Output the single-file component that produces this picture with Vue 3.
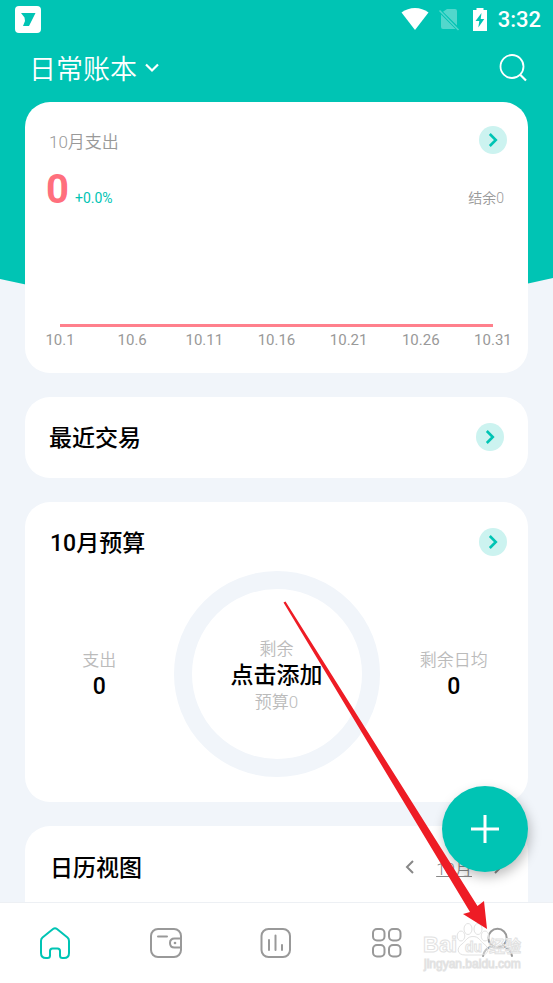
<script setup>
const days = ['10.1', '10.6', '10.11', '10.16', '10.21', '10.26', '10.31']
</script>

<template>
  <div class="app">
    <svg class="backdrop" viewBox="0 0 553 320" preserveAspectRatio="none" aria-hidden="true">
      <path d="M0 0H553V278Q276 342 0 279Z" />
    </svg>

    <header class="top">
      <div class="status">
        <svg class="badge" width="26" height="27" viewBox="0 0 26 27" aria-hidden="true">
          <rect width="26" height="27" rx="4" fill="#fff" />
          <path d="M6 7H20.500L14 20H8L10 15L9.500 11.500Z" fill="#00c4b4" />
        </svg>
        <div class="status-right">
          <svg width="28" height="24" viewBox="0 0 28 24" aria-hidden="true">
            <path d="M14 23L.5 5.500Q6.500 1 14 1T27.500 5.500Z" fill="#fff" />
          </svg>
          <svg class="sim" width="22" height="24" viewBox="0 0 22 24" aria-hidden="true">
            <path d="M9 2H17Q19 2 19 4V18.500L5 4.800ZM3 7.500L17.500 22H5Q3 22 3 20Z" fill="#fff" opacity=".32" />
            <path d="M1.500 3.500L20.500 23" stroke="#fff" stroke-width="1.500" opacity=".32" />
          </svg>
          <svg class="battery" width="16" height="24" viewBox="0 0 16 24" aria-hidden="true">
            <path d="M4.500 1H11.500V3H15V24H1V3H4.500Z" fill="#fff" />
            <path d="M9.500 6L3.500 14H7.300L6.300 20.500L12.300 12H8.700Z" fill="#00c4b4" />
          </svg>
          <span class="clock">3:32</span>
        </div>
      </div>
      <div class="title-bar">
        <button class="book" type="button">
          日常账本
          <svg width="16" height="12" viewBox="0 0 16 12" fill="none" stroke="#fff" stroke-width="2.200" aria-hidden="true">
            <path d="M2 2.500L8 8.500L14 2.500" />
          </svg>
        </button>
        <button class="search" type="button" aria-label="搜索">
          <svg width="28" height="28" viewBox="0 0 28 28" fill="none" stroke="#fff" stroke-width="1.800" aria-hidden="true">
            <circle cx="13" cy="12.500" r="11.500" />
            <path d="M21 20.500L27 26.500" stroke-width="2.200" />
          </svg>
        </button>
      </div>
    </header>

    <main class="cards">
      <section class="card expense">
        <div class="card-head">
          <h2 class="muted">10月支出</h2>
          <button class="more" type="button" aria-label="查看支出">
            <svg width="28" height="28" viewBox="0 0 28 28" aria-hidden="true"><path d="M10.800 8L16.800 14L10.800 20" /></svg>
          </button>
        </div>
        <div class="amounts">
          <strong class="total">0</strong>
          <span class="change">+0.0%</span>
          <span class="balance">结余0</span>
        </div>
        <div class="chart">
          <div class="line"></div>
          <ol class="axis">
            <li v-for="d in days" :key="d"><span>{{ d }}</span></li>
          </ol>
        </div>
      </section>

      <section class="card recent">
        <h2>最近交易</h2>
        <button class="more" type="button" aria-label="查看交易">
          <svg width="28" height="28" viewBox="0 0 28 28" aria-hidden="true"><path d="M10.800 8L16.800 14L10.800 20" /></svg>
        </button>
      </section>

      <section class="card budget">
        <div class="card-head">
          <h2>10月预算</h2>
          <button class="more" type="button" aria-label="查看预算">
            <svg width="28" height="28" viewBox="0 0 28 28" aria-hidden="true"><path d="M10.800 8L16.800 14L10.800 20" /></svg>
          </button>
        </div>
        <div class="summary">
          <div class="stat">
            <span>支出</span>
            <strong>0</strong>
          </div>
          <button class="ring" type="button">
            <span>剩余</span>
            <strong>点击添加</strong>
            <span>预算0</span>
          </button>
          <div class="stat">
            <span>剩余日均</span>
            <strong>0</strong>
          </div>
        </div>
      </section>

      <section class="card calendar">
        <h2>日历视图</h2>
        <div class="month">
          <button type="button" aria-label="上个月">
            <svg width="10" height="16" viewBox="0 0 10 16" aria-hidden="true"><path d="M8 2L2 8L8 14" /></svg>
          </button>
          <a href="#month">10月</a>
          <button type="button" aria-label="下个月">
            <svg width="10" height="16" viewBox="0 0 10 16" aria-hidden="true"><path d="M2 2L8 8L2 14" /></svg>
          </button>
        </div>
      </section>
    </main>

    <nav class="tabs">
      <a class="active" href="#home" aria-label="首页">
        <svg width="32" height="34" viewBox="0 0 32 34" aria-hidden="true">
          <path d="M14 3Q16 1.500 18 3L28.500 11.500Q30 12.800 30 15V27Q30 32 25 32H23.500Q21 32 21 29.500V25Q21 22.500 18.500 22.500H13.500Q11 22.500 11 25V29.500Q11 32 8.500 32H7Q2 32 2 27V15Q2 12.800 3.500 11.500Z" />
        </svg>
      </a>
      <a href="#wallet" aria-label="钱包">
        <svg width="34" height="34" viewBox="0 0 34 34" aria-hidden="true">
          <rect x="2" y="3" width="30" height="28" rx="7" />
          <path d="M9 10.500H18M32 12.500H25.500Q21 12.500 21 17T25.500 21.500H32" />
          <circle cx="26" cy="17" r="1.300" class="dot" />
        </svg>
      </a>
      <a href="#stats" aria-label="统计">
        <svg width="34" height="34" viewBox="0 0 34 34" aria-hidden="true">
          <rect x="2.500" y="3" width="28.500" height="28" rx="7" />
          <path d="M10 14V24M16.500 9.500V24M23 19V24" />
        </svg>
      </a>
      <a href="#apps" aria-label="应用">
        <svg width="34" height="34" viewBox="0 0 34 34" aria-hidden="true">
          <rect x="3" y="3" width="11.500" height="11.500" rx="4" />
          <rect x="19" y="3" width="11.500" height="11.500" rx="4" />
          <rect x="3" y="19" width="11.500" height="11.500" rx="4" />
          <rect x="19" y="19" width="11.500" height="11.500" rx="4" />
        </svg>
      </a>
      <a href="#me" aria-label="我的">
        <svg width="34" height="34" viewBox="0 0 34 34" aria-hidden="true">
          <circle cx="16.500" cy="12" r="9.200" />
          <path d="M2 30Q3.500 22.500 10.500 20.500Q16.500 23 22.500 20.500Q29.500 22.500 31 30" />
        </svg>
      </a>
    </nav>

    <button class="add" type="button" aria-label="记一笔">
      <svg width="28" height="28" viewBox="0 0 28 28" aria-hidden="true"><path d="M14 0V28M0 14H28" /></svg>
    </button>

    <svg class="mark" width="106" height="54" viewBox="0 0 106 54" aria-hidden="true">
      <g class="ink">
        <ellipse cx="41" cy="15" rx="3.800" ry="5" />
        <ellipse cx="48" cy="8" rx="4" ry="5.500" />
        <ellipse cx="58" cy="8" rx="4" ry="5.500" />
        <ellipse cx="65" cy="15" rx="3.800" ry="5" />
        <path d="M53 15.500C47 15.500 46 20 42 23C36 27 37 34 45 34H61C69 34 70 27 64 23C60 20 59 15.500 53 15.500Z" />
        <text x="3" y="31" font-size="22" font-weight="700">Bai</text>
        <text x="45" y="31" font-size="14" font-weight="700">du</text>
        <text x="69" y="31" font-size="16" font-weight="700">经验</text>
        <text x="4" y="47" font-size="12">jingyan.baidu.com</text>
      </g>
    </svg>

    <svg class="pointer" width="204" height="328" viewBox="0 0 204 328" aria-hidden="true">
      <path d="M.5 1.500L2.500 .5L194.500 305L201 300L204 328L180 313L187 311Z" />
    </svg>
  </div>
</template>

<style>
body {
  margin: 0;
}
</style>

<style scoped>
.app {
  position: relative;
  display: flex;
  flex-direction: column;
  height: 100vh;
  overflow: hidden;
  background: #f1f5fa;
  color: #000;
  font-family: Roboto, "Noto Sans CJK SC", sans-serif;
}

button {
  padding: 0;
  border: 0;
  background: none;
  color: inherit;
  font: inherit;
  cursor: pointer;
}

svg {
  display: block;
}

h2 {
  margin: 0;
  padding-top: 4px;
  font-size: 23px;
  line-height: 28px;
  font-weight: 500;
}

.backdrop {
  position: absolute;
  top: 0;
  left: 0;
  width: 100%;
  height: 320px;
  fill: #00c4b4;
}

.top {
  position: relative;
  color: #fff;
}

.status {
  display: flex;
  align-items: center;
  justify-content: space-between;
  height: 38px;
  padding: 0 12px 0 15px;
}

.status-right {
  display: flex;
  align-items: center;
}

.sim {
  margin-left: 9px;
}

.battery {
  margin-left: 12px;
}

.clock {
  margin-left: 10px;
  font-size: 22px;
  font-weight: 500;
}

.title-bar {
  display: flex;
  align-items: center;
  justify-content: space-between;
  height: 64px;
  padding: 0 26px 5px 29px;
  box-sizing: border-box;
}

.book {
  display: flex;
  align-items: center;
  gap: 7px;
  font-size: 27px;
  font-weight: 350;
}

.cards {
  position: relative;
  display: flex;
  flex: 1;
  flex-direction: column;
  gap: 24px;
  min-height: 0;
  padding: 0 25px;
  overflow-y: auto;
  scrollbar-width: none;
}

.card {
  flex-shrink: 0;
  box-sizing: border-box;
  border-radius: 25px;
  background: #fff;
}

.card-head {
  display: flex;
  align-items: center;
  justify-content: space-between;
}

.expense {
  padding: 22px 21px;
}

.expense .muted {
  padding-left: 3px;
  color: #999;
  font-size: 17px;
  font-weight: 350;
}

.more {
  border-radius: 50%;
  background: #ccf3f0;
  fill: none;
  stroke: #00c4b4;
  stroke-width: 2.6px;
}

.amounts {
  display: flex;
  align-items: baseline;
  margin-top: 10px;
  padding-right: 3px;
  font-size: 14px;
  line-height: 48px;
}

.total {
  color: #ff6f7d;
  font-size: 40px;
}

.change {
  margin-left: 6px;
  color: #00c4b4;
}

.balance {
  margin-left: auto;
  color: #999;
  font-weight: 350;
}

.chart {
  margin-top: 102px;
  padding: 0 14px;
}

.line {
  height: 3px;
  background: #ff808c;
}

.axis {
  display: flex;
  justify-content: space-between;
  margin: 2px 0 0;
  padding: 0;
  list-style: none;
  color: #999;
  font-size: 15px;
  line-height: 22px;
}

.axis li {
  display: flex;
  justify-content: center;
  width: 0;
}

.recent {
  display: flex;
  align-items: center;
  justify-content: space-between;
  padding: 24px 24px 25px;
}

.budget {
  height: 300px;
  padding: 24px 21px 24px 25px;
}

.summary {
  display: grid;
  grid-template-columns: 1fr 206px 1fr;
  align-items: center;
  margin: 13px -21px 0 -25px;
}

.stat,
.ring {
  display: flex;
  flex-direction: column;
  align-items: center;
  color: #bbb;
  font-size: 17px;
  font-weight: 350;
  line-height: 26px;
}

.ring {
  justify-content: center;
  box-sizing: border-box;
  height: 206px;
  padding-top: 3px;
  border: 18px solid #f1f5fa;
  border-radius: 50%;
  line-height: 25px;
}

.stat strong,
.ring strong {
  color: #000;
  font-size: 23px;
  font-weight: 500;
  line-height: 28px;
}

.calendar {
  display: flex;
  align-items: flex-start;
  justify-content: space-between;
  height: 340px;
  padding: 25px;
}

.month {
  display: flex;
  align-items: center;
  gap: 21px;
  height: 32px;
  fill: none;
  stroke: #888;
  stroke-width: 2px;
}

.month a {
  color: #888;
  font-size: 17px;
  font-weight: 350;
}

.tabs {
  position: relative;
  display: grid;
  grid-template-columns: repeat(5, 1fr);
  box-sizing: border-box;
  height: 81px;
  border-top: 1px solid #edf0f4;
  background: #fff;
}

.tabs a {
  display: flex;
  align-items: center;
  justify-content: center;
  fill: none;
  stroke: #999;
  stroke-width: 2px;
  stroke-linecap: round;
}

.tabs .active {
  stroke: #00c4b4;
}

.tabs .dot {
  fill: #999;
  stroke: none;
}

.add {
  position: absolute;
  right: 25px;
  bottom: 111px;
  display: flex;
  align-items: center;
  justify-content: center;
  width: 86px;
  height: 86px;
  border-radius: 50%;
  background: #00c4b4;
  box-shadow: 2px 5px 12px rgba(0, 0, 0, 0.25);
  stroke: #fff;
  stroke-width: 3px;
}

.mark {
  position: absolute;
  right: 27px;
  bottom: 8px;
  pointer-events: none;
}

.ink {
  fill: rgba(255, 255, 255, 0.4);
  stroke: #e2e2e2;
  stroke-width: 1px;
  font-family: "Liberation Sans", "Noto Sans CJK SC", sans-serif;
}

.pointer {
  position: absolute;
  right: 66px;
  bottom: 54px;
  fill: #ee1c25;
  pointer-events: none;
}
</style>
